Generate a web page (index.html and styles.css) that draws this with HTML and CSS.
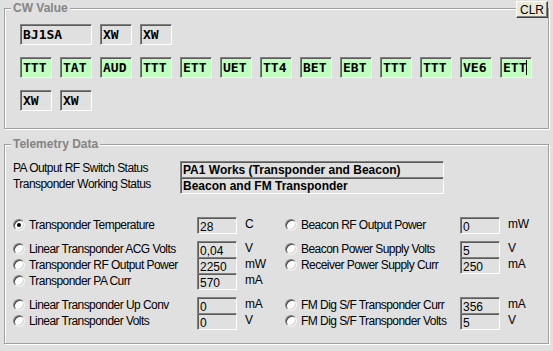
FILE: index.html
```html
<!DOCTYPE html>
<html>
<head>
<meta charset="utf-8">
<title>CW Value / Telemetry</title>
<link rel="stylesheet" href="styles.css">
</head>
<body>
<div class="group cw">
  <div class="legend">CW Value</div>
  <button class="clr">CLR</button>
  <div class="cw-rows">
    <div class="cw-row">
      <div class="cwbox wide">BJ1SA</div>
      <div class="cwbox">XW</div>
      <div class="cwbox">XW</div>
    </div>
    <div class="cw-row">
      <div class="cwbox green">TTT</div>
      <div class="cwbox green">TAT</div>
      <div class="cwbox green">AUD</div>
      <div class="cwbox green">TTT</div>
      <div class="cwbox green">ETT</div>
      <div class="cwbox green">UET</div>
      <div class="cwbox green">TT4</div>
      <div class="cwbox green">BET</div>
      <div class="cwbox green">EBT</div>
      <div class="cwbox green">TTT</div>
      <div class="cwbox green">TTT</div>
      <div class="cwbox green">VE6</div>
      <div class="cwbox green">ETT<span class="caret"></span></div>
    </div>
    <div class="cw-row">
      <div class="cwbox">XW</div>
      <div class="cwbox">XW</div>
    </div>
  </div>
</div>

<div class="group tele">
  <div class="legend">Telemetry Data</div>
  <div class="status">
    <div class="slabel">PA Output RF Switch Status</div>
    <div class="sbox">PA1 Works (Transponder and Beacon)</div>
    <div class="slabel">Transponder Working Status</div>
    <div class="sbox">Beacon and FM Transponder</div>
  </div>

  <div class="readings">
    <div class="section">
      <div class="cell l">
        <div class="opt"><span class="radio on"></span><span>Transponder Temperature</span></div>
        <div class="val">28</div><div class="unit">C</div>
      </div>
      <div class="cell r">
        <div class="opt"><span class="radio"></span><span>Beacon RF Output Power</span></div>
        <div class="val">0</div><div class="unit">mW</div>
      </div>
    </div>

    <div class="section">
      <div class="cell l">
        <div class="opt"><span class="radio"></span><span>Linear Transponder ACG Volts</span></div>
        <div class="val">0,04</div><div class="unit">V</div>
      </div>
      <div class="cell r">
        <div class="opt"><span class="radio"></span><span>Beacon Power Supply Volts</span></div>
        <div class="val">5</div><div class="unit">V</div>
      </div>
      <div class="cell l">
        <div class="opt"><span class="radio"></span><span>Transponder RF Output Power</span></div>
        <div class="val">2250</div><div class="unit">mW</div>
      </div>
      <div class="cell r">
        <div class="opt"><span class="radio"></span><span>Receiver Power Supply Curr</span></div>
        <div class="val">250</div><div class="unit">mA</div>
      </div>
      <div class="cell l">
        <div class="opt"><span class="radio"></span><span>Transponder PA Curr</span></div>
        <div class="val">570</div><div class="unit">mA</div>
      </div>
      <div class="cell r"></div>
    </div>

    <div class="section">
      <div class="cell l">
        <div class="opt"><span class="radio"></span><span>Linear Transponder Up Conv</span></div>
        <div class="val">0</div><div class="unit">mA</div>
      </div>
      <div class="cell r">
        <div class="opt"><span class="radio"></span><span>FM Dig S/F Transponder Curr</span></div>
        <div class="val">356</div><div class="unit">mA</div>
      </div>
      <div class="cell l">
        <div class="opt"><span class="radio"></span><span>Linear Transponder Volts</span></div>
        <div class="val">0</div><div class="unit">V</div>
      </div>
      <div class="cell r">
        <div class="opt"><span class="radio"></span><span>FM Dig S/F Transponder Volts</span></div>
        <div class="val">5</div><div class="unit">V</div>
      </div>
    </div>
  </div>
</div>
</body>
</html>
```
FILE: styles.css
```css
html, body {
  margin: 0;
}
body {
  box-sizing: border-box;
  width: 553px;
  height: 351px;
  overflow: hidden;
  padding: 8px 0 0 4px;
  background: #e0e0e0;
  color: #000;
  font-family: "Liberation Sans", Arial, sans-serif;
  font-size: 12px;
}

.group {
  position: relative;
  box-sizing: border-box;
  width: 545px;
  border: 1px solid #a0a0a0;
  box-shadow: inset 1px 1px 0 #fff, 1px 1px 0 #fff;
}

.legend {
  position: absolute;
  top: -9px;
  left: 6px;
  padding: 0 2px;
  background: #e0e0e0;
  color: #858585;
  font-weight: bold;
  font-size: 12px;
  line-height: 16px;
}

.cw {
  height: 121px;
  padding: 15px 0 0 15px;
}

.clr {
  position: absolute;
  top: -8px;
  right: 0;
  box-sizing: border-box;
  width: 32px;
  height: 17px;
  margin: 0;
  padding: 0;
  background: #ece9d8;
  border: 1px solid;
  border-color: #fff #404040 #404040 #fff;
  box-shadow: inset -1px -1px 0 #808080;
  color: #000;
  font-family: "Liberation Sans", Arial, sans-serif;
  font-size: 12px;
  line-height: 14px;
}

.cw-rows {
  display: flex;
  flex-direction: column;
  gap: 12px;
}
.cw-row {
  display: flex;
  gap: 8px;
}
.cwbox {
  box-sizing: border-box;
  width: 32px;
  height: 21px;
  padding-left: 2px;
  border: 1px solid;
  border-color: #808080 #fff #fff #808080;
  box-shadow: inset 1px 1px 0 #5a5a5a;
  background: #e0e0e0;
  font-family: "DejaVu Sans Mono", "Liberation Mono", monospace;
  font-weight: bold;
  font-size: 13px;
  line-height: 19px;
  white-space: nowrap;
}
.cwbox.wide {
  width: 72px;
}
.cwbox.green {
  background: #c0ffc0;
}
.caret {
  display: inline-block;
  width: 1px;
  height: 15px;
  background: #000;
  vertical-align: -3px;
}

.tele {
  margin-top: 15px;
  height: 200px;
  padding: 16px 0 0 8px;
}

.status {
  display: grid;
  grid-template-columns: 167px 264px;
  grid-auto-rows: 16px;
}
.slabel {
  line-height: 15px;
  letter-spacing: -0.55px;
  white-space: nowrap;
}
.sbox {
  box-sizing: border-box;
  height: 17px;
  padding-left: 2px;
  border: 1px solid;
  border-color: #808080 #fff #fff #808080;
  box-shadow: inset 1px 1px 0 #5a5a5a;
  font-weight: bold;
  font-size: 12px;
  line-height: 16px;
  white-space: nowrap;
}

.readings {
  margin-top: 24px;
  display: flex;
  flex-direction: column;
  gap: 8px;
}
.section {
  display: grid;
  grid-template-columns: 272px 260px;
  grid-auto-rows: 16px;
}
.cell {
  display: grid;
  align-items: start;
  height: 16px;
}
.cell.l {
  grid-template-columns: 184px 40px auto;
}
.cell.r {
  grid-template-columns: 175px 40px auto;
}
.opt {
  display: flex;
  align-items: center;
  gap: 4px;
  height: 16px;
  line-height: 15px;
  letter-spacing: -0.55px;
  white-space: nowrap;
}
.radio {
  position: relative;
  flex: none;
  box-sizing: border-box;
  width: 12px;
  height: 12px;
  border-radius: 50%;
  background: #fff;
  border: 1px solid;
  border-color: #808080 #f4f4f4 #f4f4f4 #808080;
  box-shadow: inset 1px 1px 0 #404040, inset -1px -1px 0 #d4d0c8;
}
.radio.on::after {
  content: "";
  position: absolute;
  left: 3px;
  top: 3px;
  width: 4px;
  height: 4px;
  border-radius: 50%;
  background: #000;
}
.val {
  box-sizing: border-box;
  height: 17px;
  padding: 2px 0 0 2px;
  border: 1px solid;
  border-color: #808080 #fff #fff #808080;
  box-shadow: inset 1px 1px 0 #5a5a5a;
  font-size: 12px;
  line-height: 14px;
}
.unit {
  margin-left: 8px;
  line-height: 15px;
  letter-spacing: -0.3px;
  white-space: nowrap;
}
```
